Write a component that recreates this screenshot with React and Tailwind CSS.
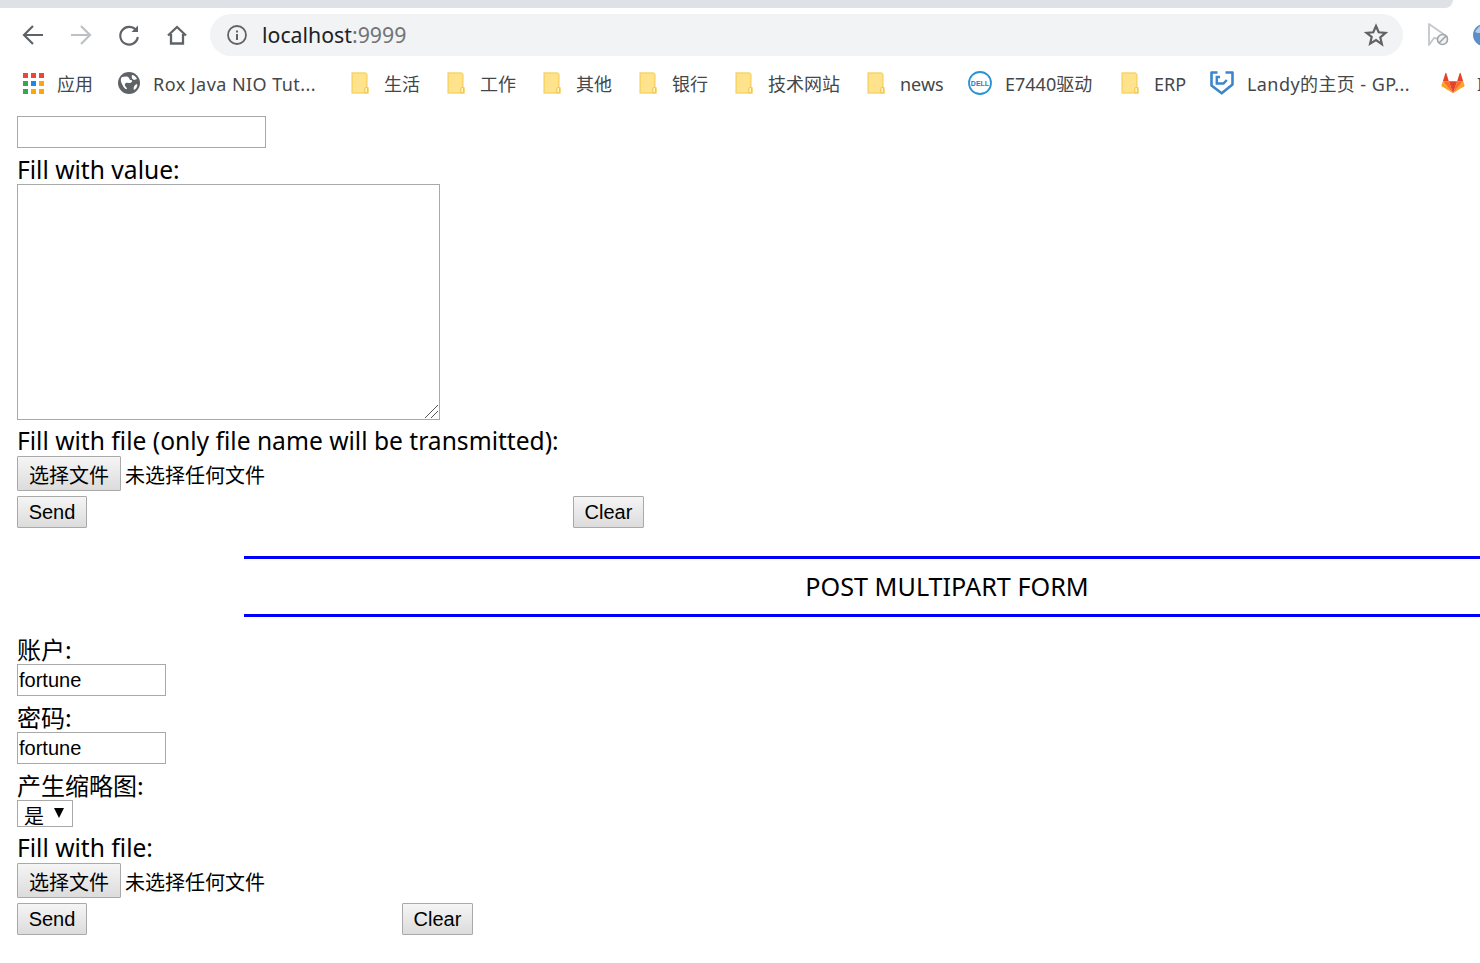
import React from "react";

function Folder() {
  return (
    <svg width="18" height="22" viewBox="0 0 18 22" className="shrink-0">
      <path d="M1.200 1h13l1.600 1.500V16h1.200v5H1.200z" fill="#fee28c" stroke="#f7d56a" strokeWidth="1.600" />
      <path d="M13.800 20.800v-4a1.400 1.400 0 0 1 2.800 0v4z" fill="#fff3c4" stroke="#f0c445" strokeWidth="1" />
    </svg>
  );
}

function Apps() {
  const c = ["#ef4437","#ef4437","#ef4437","#34a853","#1a88e8","#fbaa05","#34a853","#fbaa05","#fbaa05"];
  return (
    <div className="grid grid-cols-3 gap-[3px] w-[21px] shrink-0">
      {c.map((x, i) => (
        <svg key={i} width="5" height="5" viewBox="0 0 5 5"><rect width="5" height="5" fill={x} /></svg>
      ))}
    </div>
  );
}

function Globe() {
  return (
    <svg width="22" height="22" viewBox="0 0 22 22" className="shrink-0">
      <circle cx="11" cy="11" r="11" fill="#5f6368" />
      <path d="M4 5c2 0 4-1 6 0s1 3 3 3 1 3-1 3-4-1-5 1 2 3 2 5c-2 1-4-3-5-5S2 7 4 5zM14 3c2 0 4 2 5 4l-3 1c-1-1-3-1-2-5zM19 12c1 2-1 5-3 6-1-2 0-5 3-6z" fill="#fff" />
    </svg>
  );
}

function Dell() {
  return (
    <svg width="24" height="24" viewBox="0 0 24 24" className="shrink-0">
      <circle cx="12" cy="12" r="11" fill="none" stroke="#2a93d5" strokeWidth="1.800" />
      <text x="12" y="14.500" textAnchor="middle" fontSize="7" fontWeight="700" fill="#1b7fc2" fontFamily="Liberation Sans, sans-serif">DELL</text>
    </svg>
  );
}

function Landy() {
  return (
    <svg width="24" height="24" viewBox="0 0 24 24" className="shrink-0">
      <path d="M7.500 1.500H1.500V14.500L11.700 22.300L22.500 13.500V1.500H15.500" fill="none" stroke="#3b86cc" strokeWidth="2.600" strokeLinejoin="round" />
      <path d="M10 6H6.800V12.500H13.500L16.800 9" fill="none" stroke="#3b86cc" strokeWidth="2.400" />
    </svg>
  );
}

function Gitlab() {
  return (
    <svg width="24" height="24" viewBox="0 0 26 24" className="shrink-0">
      <path d="M2 10H8.500L5.700 1.200a.5.5 0 0 0-.9 0z" fill="#e24329" />
      <path d="M24 10H17.500L20.300 1.200a.5.5 0 0 1 .9 0z" fill="#e24329" />
      <path d="M2 10 .5 14.500a1 1 0 0 0 .4 1.100L13 23z" fill="#fca326" />
      <path d="M24 10l1.500 4.500a1 1 0 0 1-.4 1.100L13 23z" fill="#fca326" />
      <path d="M13 23 8.500 10H2z" fill="#fc6d26" />
      <path d="M13 23 17.500 10H24z" fill="#fc6d26" />
      <path d="M13 23 8.500 10h9z" fill="#e24329" />
    </svg>
  );
}

function Mark({ icon, label, gap = "gap-[15px]", w = "", track = "" }) {
  return (
    <div className={`flex items-center shrink-0 ${gap} ${w}`}>
      {icon}
      <span className={`block h-[24px] whitespace-nowrap text-[18px] leading-[26px] text-[#44474a] ${track}`}>{label}</span>
    </div>
  );
}

function Browser() {
  return (
    <div className="font-['Noto_Sans','Noto_Sans_CJK_SC',sans-serif]">
      <div className="h-2 w-[1453px] bg-[#dee1e6] rounded-br-[8px]" />
      <div className="h-[54px] flex items-center py-[6px] pl-[21px] overflow-hidden">
        <div className="flex items-center gap-[24px] w-[189px] shrink-0">
          <svg width="24" height="24" viewBox="0 0 24 24" fill="none" stroke="#5f6368" strokeWidth="2.200"><path d="M22 12H3M12 3l-9 9 9 9" /></svg>
          <svg width="24" height="24" viewBox="0 0 24 24" fill="none" stroke="#bdc1c6" strokeWidth="2.200"><path d="M2 12h19M12 3l9 9-9 9" /></svg>
          <svg width="24" height="24" viewBox="0 0 24 24" fill="none" stroke="#5f6368" strokeWidth="2.200"><path d="M19.500 8a8.800 8.800 0 1 0 1.300 6" /><path d="M21 2.500V9h-6.500z" fill="#5f6368" stroke="none" /></svg>
          <svg width="24" height="24" viewBox="0 0 24 24" fill="none" stroke="#5f6368" strokeWidth="2.300"><path d="M3 12.500 12 4l9 8.500M6 11v9.500h12V11" /></svg>
        </div>
        <div className="w-[1193px] h-[42px] rounded-[21px] bg-[#f1f3f4] flex items-center pl-[17px] pr-[15px] shrink-0">
          <svg width="20" height="20" viewBox="0 0 20 20" fill="none" className="shrink-0">
            <circle cx="10" cy="10" r="9" stroke="#5f6368" strokeWidth="1.800" />
            <rect x="9" y="9" width="2" height="6" fill="#5f6368" />
            <rect x="9" y="5.500" width="2" height="2" fill="#5f6368" />
          </svg>
          <span className="ml-[15px] text-[21.300px] leading-[28px] text-[#202124]">localhost<span className="text-[#6f7479]">:9999</span></span>
          <svg width="24" height="24" viewBox="0 0 24 24" fill="none" stroke="#5f6368" strokeWidth="2.200" className="ml-auto"><path d="m12 3 2.700 6.300 6.800.6-5.200 4.500 1.600 6.700L12 17l-5.900 3.600 1.600-6.700L2.500 9.900l6.800-.6z" /></svg>
        </div>
        <svg width="24" height="24" viewBox="0 0 24 24" fill="none" className="ml-[24px] shrink-0">
          <path d="M2 1v21l5-7 4 .500 9-2z" stroke="#c4c7ca" strokeWidth="1.800" strokeLinejoin="round" />
          <circle cx="15.500" cy="16.500" r="5" fill="#f1f3f4" stroke="#a0a4a8" strokeWidth="1.600" />
          <path d="m12 20 7-7" stroke="#a0a4a8" strokeWidth="1.600" />
        </svg>
        <svg width="8" height="24" viewBox="0 0 8 24" className="ml-[21px] shrink-0">
          <circle cx="12" cy="12" r="11" fill="#5b8fc7" />
          <path d="M3 9c3-5 5-6 5-6v7c-2 0-3 0-5-1z" fill="#b6cfe8" />
        </svg>
      </div>
      <div className="h-[46px] flex items-start pt-[9px] pl-[23px] overflow-hidden">
        <Mark w="w-[95px]" icon={<Apps />} label="应用" gap="gap-[13px]" />
        <Mark w="w-[233px]" icon={<Globe />} label="Rox Java NIO Tut..." gap="gap-[13px]" track="tracking-[0.45px]" />
        <Mark w="w-[96px]" icon={<Folder />} label="生活" />
        <Mark w="w-[96px]" icon={<Folder />} label="工作" />
        <Mark w="w-[96px]" icon={<Folder />} label="其他" />
        <Mark w="w-[96px]" icon={<Folder />} label="银行" />
        <Mark w="w-[132px]" icon={<Folder />} label="技术网站" />
        <Mark w="w-[101px]" icon={<Folder />} label="news" />
        <Mark w="w-[153px]" icon={<Dell />} label="E7440驱动" gap="gap-[13px]" />
        <Mark w="w-[89px]" icon={<Folder />} label="ERP" />
        <Mark w="w-[231px]" icon={<Landy />} label="Landy的主页 - GP..." gap="gap-[13px]" track="tracking-[0.42px]" />
        <Mark icon={<Gitlab />} label="I" gap="gap-[12px]" />
      </div>
    </div>
  );
}

const inputCls = "block border border-[#a9a9a9] bg-white text-black outline-none";
const btnCls = "block border border-[#a9a9a9] rounded-[1px] bg-gradient-to-b from-[#f5f5f5] to-[#dcdcdc] text-black font-['Liberation_Sans','Noto_Sans_CJK_SC',sans-serif] text-[20px]";
const labelCls = "text-black text-[24.600px] h-[28px] leading-[28px] font-['Noto_Sans','Noto_Sans_CJK_SC',sans-serif]";
const cnLabelCls = "text-black text-[24px] h-[28px] leading-[26px] font-['Noto_Sans_CJK_SC',sans-serif]";
const fieldCls = "w-[149px] h-[32px] text-[20px] pl-[1px] font-['Liberation_Sans',sans-serif]";

function FileRow({ className }) {
  return (
    <div className={`flex items-center ${className}`}>
      <button type="button" className={`${btnCls} h-[35px] w-[104px] pt-[3px] font-['Noto_Sans_CJK_SC',sans-serif]`}>选择文件</button>
      <span className="ml-[4px] h-[30px] leading-[32px] text-[20px] text-black font-['Noto_Sans_CJK_SC',sans-serif]">未选择任何文件</span>
    </div>
  );
}

function Buttons({ clearMl, className }) {
  return (
    <div className={`flex ${className}`}>
      <button type="button" className={`${btnCls} h-[32px] w-[70px]`}>Send</button>
      <button type="button" className={`${btnCls} h-[32px] w-[71px] ${clearMl}`}>Clear</button>
    </div>
  );
}

export default function App() {
  return (
    <div className="w-[1480px] h-[963px] overflow-hidden bg-white">
      <Browser />
      <form className="pl-[17px] pt-[8px]">
        <input className={`${inputCls} w-[249px] h-[32px]`} />
        <div className={`${labelCls} mt-[8px]`}>Fill with value:</div>
        <div className="relative w-[423px] h-[236px]">
          <textarea readOnly className={`${inputCls} w-[423px] h-[236px] resize-none`} />
          <svg width="15" height="15" viewBox="0 0 15 15" className="absolute right-[1px] bottom-[1px] pointer-events-none">
            <path d="M1 14 14 1M7 14l7-7" stroke="#555" strokeWidth="1" fill="none" />
          </svg>
        </div>
        <div className={`${labelCls} mt-[7px]`}>Fill with file (only file name will be transmitted):</div>
        <FileRow className="mt-[1px]" />
        <Buttons clearMl="ml-[486px]" className="mt-[5px]" />
        <div className="ml-[227px] mt-[28px] w-[1406px] h-[61px] border-y-[3px] border-[#0000ff] flex items-center justify-center">
          <span className="text-[25.200px] text-black font-['Noto_Sans',sans-serif] whitespace-nowrap">POST MULTIPART FORM</span>
        </div>
        <div className={`${cnLabelCls} mt-[19px]`}>账户:</div>
        <input defaultValue="fortune" className={`${inputCls} ${fieldCls}`} />
        <div className={`${cnLabelCls} mt-[8px]`}>密码:</div>
        <input defaultValue="fortune" className={`${inputCls} ${fieldCls}`} />
        <div className={`${cnLabelCls} mt-[8px]`}>产生缩略图:</div>
        <div className="relative w-[56px] h-[27px]">
          <select className={`${inputCls} appearance-none w-[56px] h-[27px] pl-[6px] pt-[4px] text-[20px] leading-[20px] font-['Noto_Sans_CJK_SC',sans-serif]`}>
            <option>是</option>
          </select>
          <svg width="10" height="10" viewBox="0 0 10 10" className="absolute left-[37px] top-[8px] pointer-events-none"><path d="M0 0h10L5 10z" fill="#000" /></svg>
        </div>
        <div className={`${labelCls} mt-[7px]`}>Fill with file:</div>
        <FileRow className="mt-[1px]" />
        <Buttons clearMl="ml-[315px]" className="mt-[5px]" />
      </form>
    </div>
  );
}
